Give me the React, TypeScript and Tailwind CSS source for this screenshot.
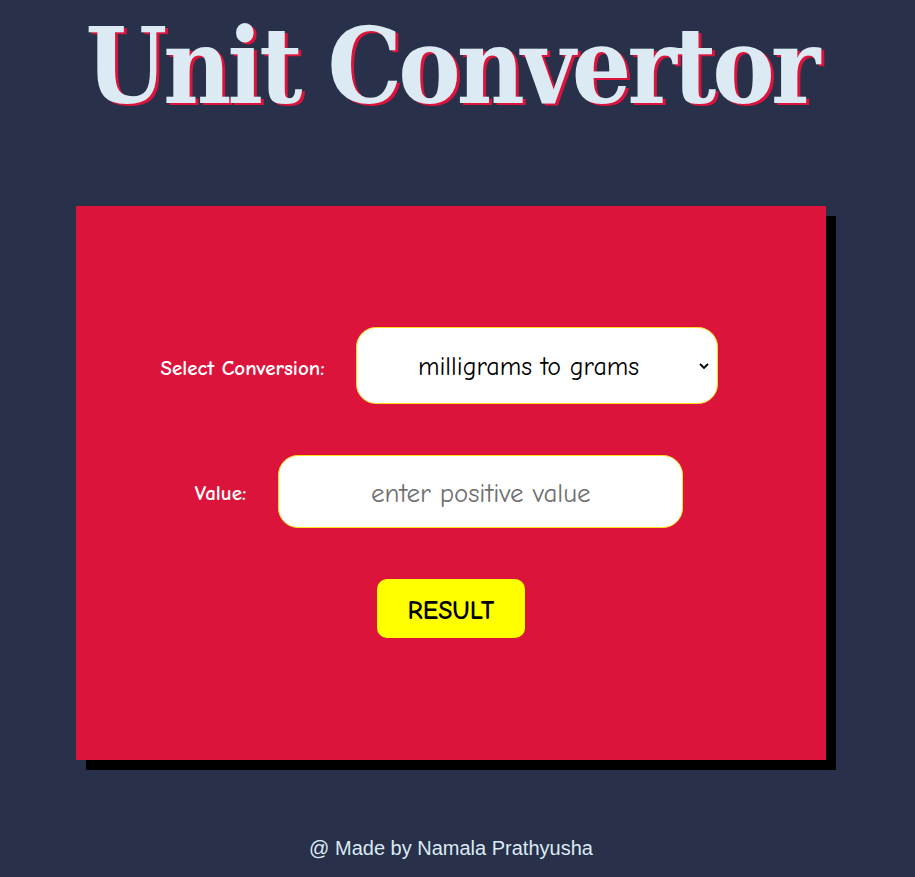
import React from "react";

const comic = { fontFamily: '"Comic Sans MS", "Comic Neue", "Open Sans", sans-serif' };

export default function App() {
  return (
    <div className="min-h-[877px] w-full overflow-hidden bg-[#28304a] flex flex-col items-center pr-[13px]">
      <h1
        className="mt-[12px] whitespace-nowrap text-[104px] leading-[110px] font-bold tracking-[-3.8px] text-[#dbeaf3] [text-shadow:3px_2px_0_#dc143c]"
        style={{ fontFamily: '"DejaVu Serif Condensed", "DejaVu Serif", serif' }}
      >
        Unit Convertor
      </h1>

      <div className="mt-[84px] w-[750px] h-[554px] bg-[#dc143c] shadow-[10px_10px_0_#000] flex flex-col items-center pt-[121px]" style={comic}>
        <div className="flex items-center gap-[31px] pr-6">
          <label className="text-white text-[21px] font-bold pt-[6px]">Select Conversion:</label>
          <div className="relative w-[362px] h-[77px] bg-white rounded-[20px] border border-yellow-300 flex items-center justify-center pt-[3px]">
            <span className="text-black text-[26px] pr-4">milligrams to grams</span>
            <svg className="absolute right-[7px] top-1/2 -translate-y-1/2" width="12" height="12" viewBox="0 0 12 12">
              <path d="M2 4l4 4 4-4" fill="none" stroke="#000" strokeWidth="1.8" />
            </svg>
          </div>
        </div>

        <div className="flex items-center gap-[32px] pr-6 mt-[51px]">
          <label className="text-white text-[21px] font-bold pt-[4px]">Value:</label>
          <input
            className="w-[405px] h-[73px] bg-white rounded-[20px] border border-yellow-300 text-center text-[27px] pt-[3px] placeholder:text-[#6f6f6f] outline-none"
            placeholder="enter positive value"
            style={comic}
          />
        </div>

        <button className="mt-[51px] w-[148px] h-[59px] bg-[#ffff00] rounded-[10px] text-black text-[26px] font-bold pt-[6px]" style={comic}>
          RESULT
        </button>
      </div>

      <p className="mt-[73px] text-[20px] text-[#dbeaf3]" style={{ fontFamily: '"Liberation Sans", Arial, sans-serif' }}>
        @ Made by Namala Prathyusha
      </p>
    </div>
  );
}
